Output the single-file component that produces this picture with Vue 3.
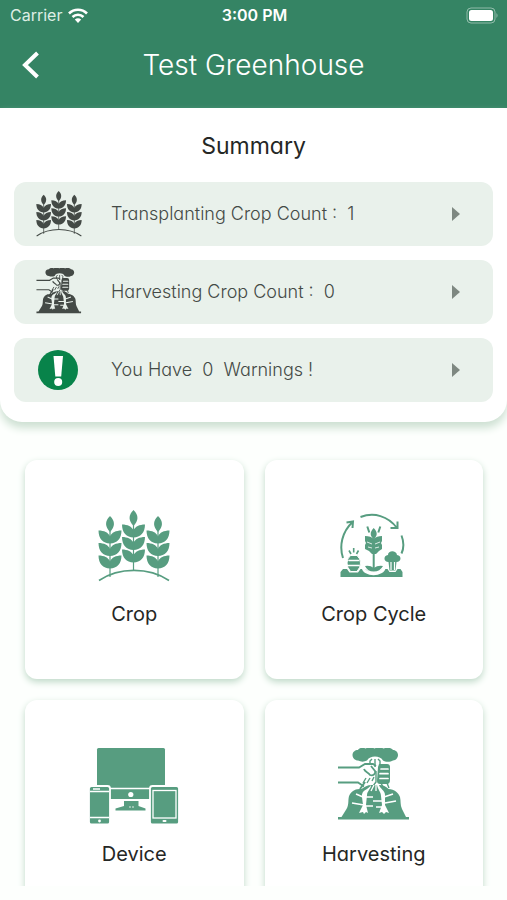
<script setup>
const summary = [
  { icon: 'crop', text: 'Transplanting Crop Count :\u00a0 1' },
  { icon: 'harvest', text: 'Harvesting Crop Count :\u00a0 0' },
  { icon: 'warning', text: 'You Have \u00a00\u00a0 Warnings !' },
]

const tiles = [
  { icon: 'crop', label: 'Crop' },
  { icon: 'cycle', label: 'Crop Cycle' },
  { icon: 'device', label: 'Device' },
  { icon: 'harvest', label: 'Harvesting' },
]

const boxes = {
  crop: '0 0 72 72',
  harvest: '0 0 72 76',
  warning: '0 0 40 40',
  cycle: '0 0 70 66',
  device: '0 0 91 80',
}
</script>

<template>
  <div class="screen">
    <svg class="sprite" aria-hidden="true">
      <defs>
        <path id="bud" d="M0 0C5.500 5 5 11 0 16C-5 11 -5.500 5 0 0Z" />
        <path id="leaves" d="M-11.500 0C-11.500 8 -7 13 0 13C7 13 11.500 8 11.500 0C6 0 1.500 2 0 6C-1.500 2 -6 0 -11.500 0Z" />
        <g id="stalk">
          <use href="#bud" />
          <use href="#leaves" y="14.500" />
          <use href="#leaves" y="27" />
          <use href="#leaves" y="39.500" />
          <path d="M0 15V61" fill="none" stroke="currentColor" stroke-width="1.200" />
        </g>
        <symbol id="crop" viewBox="0 0 72 72">
          <use href="#stalk" x="12" y="6" />
          <use href="#stalk" x="35.500" y="0" />
          <use href="#stalk" x="60" y="6" />
          <path d="M1 70.500C21 57 51 57 71 70.500" fill="none" stroke="currentColor" stroke-width="1.600" />
        </symbol>

        <symbol id="harvest" viewBox="0 2 72 76">
          <path d="M20 14.500c-3 0-5.500-2.500-5.500-5.500S17 4 20 4c1-2 5-3 7.500-1.500 3-1.500 6-1.500 9 0 3-1.500 6-1.500 9 0 4-1.500 8-.5 9.500 1.500 3 0 5 2.500 5 5s-2 5.500-5 5.500c-3 2-8 1.500-10 0-2-3-4.500-4-8-4S31 11.500 29 14.500c-3 1.500-6 1.500-9 0Z" />
          <path d="M32 19v-4l2-2M42 18v-3l-2-2M37 13v8" fill="none" stroke="currentColor" stroke-width="1.400" />
          <path d="M0 21.500h21l6-3.500h8l3 2M0 36.500h20l6 4" fill="none" stroke="currentColor" stroke-width="1.800" />
          <path d="M26 23c1 3 4 3 6 6 3 1 6-1 5-4l-4-5" fill="none" stroke="currentColor" stroke-width="1.800" />
          <path d="M41 18h8q3 0 3 3v13q0 4-3 4h-7q-3 0-3-3l1-14Z" />
          <path d="M43 23h7M42 27.700h8M42 32.500h8" class="cut" stroke-width="1.700" stroke-linecap="round" />
          <path d="M36 31l-2 4M32 32l-3 5M28 32l-3 5M38 25v11l-3 4M43 37l2 4M49 37l2 5" fill="none" stroke="currentColor" stroke-width="1.400" />
          <path d="M0 71h3.500l5-8c3-5 1-10 3-14 3-5 6-6 12-6 3-2 6-4 10-4h8c4 0 7 2 9 4 6 0 10 4 11.500 8 1 4 0 8 2 12l4 8h3v2.500H0Z" />
          <path d="M22 43l5-7" fill="none" stroke="currentColor" stroke-width="2" />
          <path d="M33 39c-2 5-10 4-9 12l1 8-4 8 4-1 1 2 2-2 2 1-2-8 1-10c0-4 4-6 4-10ZM39 39c1 5 4 7 4 11l1 9-3 8 3-1 2 2 2-2 3 1-4-8 0-10c0-5-5-6-6-10Z" class="hole" />
          <path d="M18 48l7 3M14 57l12 2M28 51h7M28 60h7M35 55h9M38 61h7M46 51l9-3M47 57l11-2" class="cut" stroke-width="1.600" />
          <path d="M36 39l-3 6M38 38v7" class="cut" stroke-width="1.300" />
        </symbol>

        <symbol id="warning" viewBox="0 0 40 40">
          <circle cx="20" cy="20" r="20" />
          <path d="M15.500 6h9.500l-1.800 20.500h-5.900Z" class="mark" />
          <circle cx="20.200" cy="32" r="4" class="mark" />
        </symbol>

        <symbol id="cycle" viewBox="0 0 70 66">
          <g fill="none" stroke="currentColor" stroke-width="2">
            <path d="M4 45C0 33 3 19 13.500 9M7.500 9.500L14 8.500L13.500 15" />
            <path d="M21.500 4C35 -1 49 3 58 15M51.500 15H58.500V8.500" />
            <path d="M62.500 22.500C65 29 65 35 62.500 40.500" />
            <path d="M28.300 13.500l2 6M41.300 13.500l-2 6" />
            <path d="M14.700 35v4.500M10 37.500l2 3.500M19.500 37.500l-2 3.500" stroke-width="1.600" />
          </g>
          <path d="M34.700 15c4 4 4 8 0 11-4-3-4-7 0-11ZM26 23c4 0 7 1 8.700 3 1.700-2 5-3 8.300-3v5l-1 2 1 2v4l-3 2-3 3h-4l-3-3-4-2v-4l1-2-1-2Z" />
          <path d="M28 29l5 2M41 29l-5 2M29 34l4 1M40 34l-4 1" class="cut" stroke-width=".8" />
          <path d="M1.500 64v-5l2.500-3h4l2.500 3.500h8.500l2.500-3.500h5q8.500 9 17 0h5l2 3h6l2-3h3l2 3v5Z" />
          <path d="M24 54c1 9 20 9 21.500 0" class="cut" stroke-width="3" />
          <path d="M26 53q5-1 8.700 2Q39 52 44 53q-3 5.500-9.300 5.500T26 53Z" />
          <path d="M34.700 38v18" fill="none" stroke="currentColor" stroke-width="2" />
          <path d="M11.500 42.500h6.500q3.500 3 3.500 7.500t-3.500 8.500h-6.500q-3.500-4-3.500-8.500t3.500-7.500Z" stroke-width="1" class="ring" />
          <path d="M10 47.500h9.500M9.500 52.500h10.500" class="cut" stroke-width="1.600" stroke-linecap="round" />
          <path d="M49.500 49c-5 0-5.500-6.500-.5-7 0-5 8.500-5 9 0 5 .5 4.500 7-.5 7l-1 8.500h-6Z" />
          <path d="M52 49v8M55.500 49v8" class="cut" stroke-width="1.200" />
        </symbol>

        <symbol id="device" viewBox="0 0 91 80">
          <rect x="8" y="2" width="68" height="51" rx="1.500" />
          <path d="M8 42.500h68" class="cut" stroke-width="1.400" />
          <circle cx="41.800" cy="48.500" r="2.600" class="hole" />
          <path d="M35 55h14.500v5l7 2.500v2h-30v-2l8.500-2.500Z" />
          <path d="M40 61h5" class="cut" stroke-width=".8" stroke-dasharray="2 1" />
          <rect x="0" y="40" width="21" height="38.500" rx="2.500" class="ring" stroke-width="1.800" />
          <path d="M1 45.500h19M1 71.500h19M4 43h7" class="cut" stroke-width="1.400" />
          <circle cx="10.500" cy="75" r="1.400" class="hole" />
          <rect x="61" y="40" width="29" height="38.500" rx="2.500" class="ring" stroke-width="1.800" />
          <rect x="64" y="44.500" width="23" height="27.500" class="cut" stroke-width="1.300" />
          <rect x="73.500" y="74" width="4" height="2" rx="1" class="hole" />
        </symbol>
      </defs>
    </svg>

    <header class="top">
      <div class="status">
        <span class="carrier">
          Carrier
          <svg class="wifi" viewBox="0 0 20 15" aria-hidden="true">
            <g fill="none" stroke="currentColor" stroke-width="2.600">
              <path d="M1 5.500C6 .5 14 .5 19 5.500" />
              <path d="M4.500 9C7.500 6 12.500 6 15.500 9" />
            </g>
            <path d="M10 15L6.800 11.600Q10 9 13.200 11.600Z" fill="currentColor" />
          </svg>
        </span>
        <span class="clock">3:00 PM</span>
        <svg class="battery" viewBox="0 0 33 17" aria-hidden="true">
          <rect x="1" y="1" width="28" height="15" rx="4" fill="none" stroke="currentColor" stroke-opacity=".45" />
          <rect x="3" y="3" width="24" height="11" rx="2.500" fill="currentColor" />
          <path d="M30.500 6q2 2.500 0 5Z" fill="currentColor" fill-opacity=".5" />
        </svg>
      </div>
      <div class="nav">
        <button class="back" type="button" aria-label="Back">
          <svg viewBox="0 0 18 28" aria-hidden="true">
            <path d="M15.500 2L3 14L15.500 26" fill="none" stroke="currentColor" stroke-width="4" />
          </svg>
        </button>
        <h1>Test Greenhouse</h1>
      </div>
    </header>

    <section class="summary">
      <h2>Summary</h2>
      <button v-for="row in summary" :key="row.icon" class="row" type="button">
        <svg class="row-icon" :class="row.icon" :viewBox="boxes[row.icon]" aria-hidden="true">
          <use :href="'#' + row.icon" />
        </svg>
        <span class="row-text">{{ row.text }}</span>
        <svg class="arrow" viewBox="0 0 8 14" aria-hidden="true">
          <path d="M0 0L8 7L0 14Z" fill="currentColor" />
        </svg>
      </button>
    </section>

    <main class="tiles">
      <button v-for="tile in tiles" :key="tile.label" class="tile" type="button">
        <span class="tile-art">
          <svg :class="tile.icon" :viewBox="boxes[tile.icon]" aria-hidden="true">
            <use :href="'#' + tile.icon" />
          </svg>
        </span>
        <span class="tile-label">{{ tile.label }}</span>
      </button>
    </main>
  </div>
</template>

<style>
body {
  background: #fdfffd;
}
</style>

<style scoped>
.screen {
  --paper: #fff;
  display: flex;
  flex-direction: column;
  height: 100vh;
  box-sizing: border-box;
  padding-bottom: 14px;
  font-family: Inter, "Liberation Sans", sans-serif;
  font-feature-settings: "cv11";
  color: #252725;
}

.sprite {
  position: absolute;
  width: 0;
  height: 0;
}

.cut {
  fill: none;
  stroke: var(--paper);
}

.hole {
  fill: var(--paper);
}

.ring {
  stroke: var(--paper);
}

.mark {
  fill: #fff;
}

button {
  border: 0;
  padding: 0;
  font: inherit;
  font-feature-settings: inherit;
  color: inherit;
}

h1,
h2 {
  margin: 0;
}

.top {
  flex: none;
  background: #358464;
  color: #fff;
  height: 108px;
}

.status {
  display: grid;
  grid-template-columns: 1fr auto 1fr;
  align-items: center;
  height: 30px;
  padding: 0 8px 0 10px;
  font-size: 16px;
  font-feature-settings: normal;
}

.carrier {
  display: flex;
  align-items: center;
  gap: 6px;
  color: #deeee5;
}

.wifi {
  width: 20px;
  height: 15px;
  color: #fff;
}

.clock {
  font-weight: 600;
}

.battery {
  justify-self: end;
  width: 33px;
  height: 17px;
}

.nav {
  display: grid;
  grid-template-columns: 40px 1fr 40px;
  align-items: center;
  height: 70px;
}

.back {
  justify-self: end;
  width: 18px;
  height: 28px;
  background: none;
  color: #fff;
}

.back svg {
  display: block;
}

h1 {
  font-size: 28px;
  font-weight: 300;
  line-height: 36px;
  text-align: center;
}

.summary {
  flex: none;
  display: flex;
  flex-direction: column;
  gap: 14px;
  padding: 20px 14px;
  background: #fff;
  border-radius: 0 0 22px 22px;
  box-shadow: 0 6px 9px #cde0d2;
}

h2 {
  font-size: 23px;
  font-weight: 400;
  line-height: 36px;
  text-align: center;
  margin-bottom: 4px;
}

.row {
  --paper: #e9f1eb;
  display: grid;
  grid-template-columns: 89px 1fr auto;
  align-items: center;
  height: 64px;
  padding: 0 33px 0 8px;
  border-radius: 12px;
  background: #e9f1eb;
  color: #444a46;
  font-size: 18px;
  font-weight: 300;
  text-align: left;
}

.row-text {
  padding-bottom: 2px;
}

.row-icon {
  width: 46px;
  height: 46px;
  margin-left: 14px;
  fill: currentColor;
}

.row-icon.harvest {
  height: 48px;
}

.row-icon.warning {
  width: 40px;
  height: 40px;
  margin-left: 16px;
  color: #08834a;
}

.arrow {
  width: 8px;
  height: 14px;
  color: #7e8881;
}

.tiles {
  flex: 1;
  min-height: 0;
  overflow-y: auto;
  scrollbar-width: none;
  display: grid;
  grid-template-columns: 1fr 1fr;
  align-content: start;
  gap: 21px;
  padding: 38px 24px 24px 25px;
}

.tile {
  display: flex;
  flex-direction: column;
  align-items: center;
  justify-content: center;
  gap: 14px;
  aspect-ratio: 1;
  padding-bottom: 4px;
  box-sizing: border-box;
  background: #fff;
  border-radius: 12px;
  box-shadow: 0 3px 7px #bfd9c8;
}

.tile-art {
  display: flex;
  align-items: center;
  height: 80px;
  color: #579d80;
}

.tile-art svg {
  display: block;
  width: 72px;
  height: 72px;
  fill: currentColor;
}

.tile-art .harvest {
  height: 76px;
}

.tile-art .cycle {
  width: 70px;
  height: 66px;
}

.tile-art .device {
  width: 91px;
  height: 80px;
}

.tile-label {
  font-size: 20px;
  line-height: 28px;
}
</style>
